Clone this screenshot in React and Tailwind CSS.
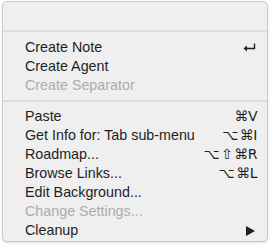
import React from "react";

const items = [
  { label: "Create Note", icon: "return" },
  { label: "Create Agent" },
  { label: "Create Separator", disabled: true },
  { sep: true },
  { label: "Paste", key: ["⌘V"] },
  { label: "Get Info for: Tab sub-menu", key: ["⌥", "⌘I"] },
  { label: "Roadmap...", key: ["⌥", "⇧", "⌘R"] },
  { label: "Browse Links...", key: ["⌥", "⌘L"] },
  { label: "Edit Background..." },
  { label: "Change Settings...", disabled: true },
  { label: "Cleanup", icon: "sub" },
];

const ReturnIcon = () => (
  <svg width="13" height="9" viewBox="0 0 13 9" className="mr-[1px]">
    <path d="M11.5 0.5 V5.5 H2" stroke="#1e1e1e" strokeWidth="1.4" fill="none" />
    <path d="M0.5 5.5 L4 2.5 V8.5 Z" fill="#1e1e1e" />
  </svg>
);

const App = () => {
  return (
    <div className="w-[271px] h-[244px] bg-white pt-[1px] pl-[2px]" style={{ fontFamily: "'Liberation Sans', Arial, sans-serif" }}>
      <div className="w-[266px] h-[241px] bg-[#efefef] border border-[#c9c9c9] rounded-[5px] shadow-sm pt-[3px]">
        <div className="h-[19px]" />
        <div className="h-[2px] bg-[#dcdcdc] mt-[6px] mb-[6px]" />
        {items.map((it, i) =>
          it.sep ? (
            <div key={i} className="h-[2px] bg-[#dcdcdc] my-[5px]" />
          ) : (
            <div
              key={i}
              className={`h-[19px] flex items-center justify-between pl-[22px] pr-[10px] text-[14.3px] leading-[19px] ${
                it.disabled ? "text-[#acacac]" : "text-[#1e1e1e]"
              }`}
            >
              <span>{it.label}</span>
              {it.key && (
                <span className="flex gap-[2px] text-[14px] tracking-[-0.5px]" style={{ fontFamily: "'DejaVu Sans', sans-serif" }}>
                  {it.key.map((k, j) => (
                    <span key={j}>{k}</span>
                  ))}
                </span>
              )}
              {it.icon === "return" && <ReturnIcon />}
              {it.icon === "sub" && (
                <svg width="9" height="10" viewBox="0 0 9 10" className="mr-[2px]">
                  <path d="M0 0 L9 5 L0 10 Z" fill="#1e1e1e" />
                </svg>
              )}
            </div>
          )
        )}
      </div>
    </div>
  );
};

export default App;
